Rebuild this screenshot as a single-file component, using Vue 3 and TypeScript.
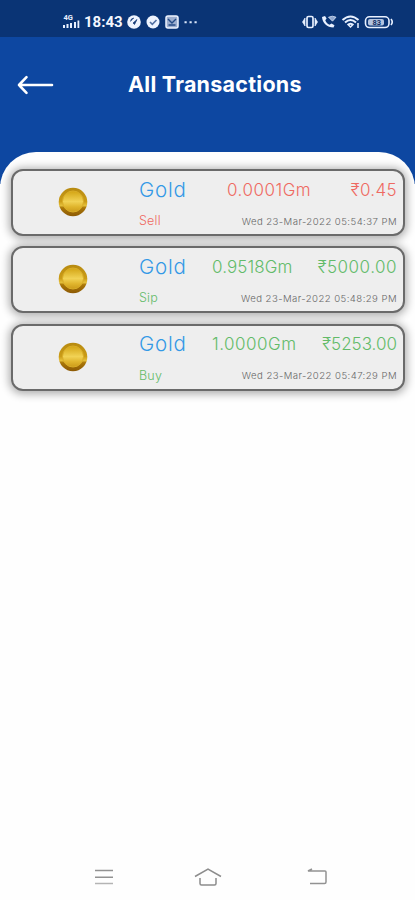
<script setup lang="ts">
interface Transaction {
  asset: string
  kind: 'Sell' | 'Sip' | 'Buy'
  weight: string
  weightSpacing: number
  amount: string
  amountSpacing: number
  date: string
}

const transactions: Transaction[] = [
  { asset: 'Gold', kind: 'Sell', weight: '0.0001Gm', weightSpacing: 0.5, amount: '₹0.45', amountSpacing: 0.35, date: 'Wed 23-Mar-2022 05:54:37 PM' },
  { asset: 'Gold', kind: 'Sip', weight: '0.9518Gm', weightSpacing: 0.1, amount: '₹5000.00', amountSpacing: 0.5, date: 'Wed 23-Mar-2022 05:48:29 PM' },
  { asset: 'Gold', kind: 'Buy', weight: '1.0000Gm', weightSpacing: 0.5, amount: '₹5253.00', amountSpacing: 0, date: 'Wed 23-Mar-2022 05:47:29 PM' },
]
</script>

<template>
  <div class="screen">
    <div class="status">
      <svg class="signal" width="18" height="18" viewBox="0 0 18 18" fill="#e8f0ff">
        <text x="0.500" y="7" font-size="7.500" font-weight="700" font-family="Roboto, sans-serif">4G</text>
        <path d="M0 12h2v3H0zM3.500 11h2v4h-2zM7 10h2v5H7zM11 9h2v6h-2zM14.500 7.500h1.800V15h-1.800z" />
      </svg>
      <span class="clock">18:43</span>
      <svg class="notices" width="72" height="16" viewBox="0 0 72 16">
        <circle cx="7" cy="8" r="6.800" fill="#eef4ff" />
        <path d="M3.500 7.500a3.800 3.800 0 0 1 3.500-3.500M6 9l4-3.500-2.500 5z" stroke="#173c78" fill="#173c78" stroke-width=".7" />
        <circle cx="26" cy="8" r="6.500" fill="#eef4ff" />
        <path d="m23 8 2.300 2.300L29.500 6" fill="none" stroke="#5270a2" stroke-width="1.600" />
        <rect x="39" y="2" width="12" height="12" rx="2" fill="#9caecf" stroke="#eef4ff" stroke-width="1.500" />
        <path d="m41 5 4 4 4-4M41.500 11h7" fill="none" stroke="#244b86" stroke-width="1.400" />
        <path d="M57.500 7.300h2.200v2h-2.200zm5 0h2.200v2h-2.200zm5 0h2.200v2h-2.200z" fill="#dbe7fa" />
      </svg>
      <svg class="system" width="94" height="18" viewBox="0 0 94 18" fill="none" stroke="#e8f0ff">
        <rect x="5" y="3.500" width="6" height="11" rx="1.500" stroke-width="1.700" />
        <path d="M3 5v8L0.500 9zM13 5v8l2.500-4z" fill="#e8f0ff" stroke-width=".7" />
        <path d="M20 4c.5 6 5 10.500 11.500 10.500l1-2.300-3-1.700-2 1.200c-2-1-3.500-2.500-4.200-4.500l1.300-1.600L23 3z" fill="#e8f0ff" stroke="none" />
        <path d="M26.500 4.200q4-2 7.500 0l-3.500 4z" fill="#8fa8d1" stroke-width=".7" />
        <path d="M40.500 7q8-7 16 0M43 9.500q5.500-5 11 0M45.500 12q3-2.500 6 0" stroke-width="2" />
        <path d="m46.500 12 2 2 2-2M56 10v5" stroke-width="1.500" />
        <rect x="63.500" y="3.800" width="23.500" height="10.700" rx="4" stroke-width="1.600" />
        <rect x="66" y="6" width="16" height="6.500" rx="2" fill="#b3c3df" stroke="none" />
        <path d="M89 6q2.500 3 0 6" stroke-width="1.600" />
        <text x="70.500" y="12" font-size="7.500" font-weight="700" font-family="Roboto, sans-serif" fill="#102f63" stroke="none">83</text>
      </svg>
    </div>

    <header class="header">
      <svg class="back" width="38" height="22" viewBox="0 0 38 22" fill="none" stroke="#fff" stroke-width="2.600" stroke-linecap="round" stroke-linejoin="round">
        <path d="M35 11H2M9.500 3.200 2 11l7.500 7.800" />
      </svg>
      <h1 class="title">All Transactions</h1>
    </header>

    <main class="sheet">
      <article v-for="item in transactions" :key="item.date" class="card" :class="item.kind.toLowerCase()">
        <div class="coin-cell">
          <svg class="coin" width="30" height="30" viewBox="0 0 30 30">
            <defs>
              <linearGradient id="rim" x1="0" y1="0" x2="0" y2="1">
                <stop offset="0" stop-color="#b78a10" />
                <stop offset=".48" stop-color="#cb9c17" />
                <stop offset=".62" stop-color="#e5c03b" />
                <stop offset=".7" stop-color="#a97608" />
                <stop offset="1" stop-color="#8d5a05" />
              </linearGradient>
              <linearGradient id="face" x1="0" y1="0" x2="0" y2="1">
                <stop offset="0" stop-color="#d3a413" />
                <stop offset=".5" stop-color="#f1d255" />
                <stop offset=".75" stop-color="#e0b52d" />
                <stop offset="1" stop-color="#cc9b1a" />
              </linearGradient>
            </defs>
            <circle cx="15" cy="15" r="14.300" fill="url(#rim)" />
            <circle cx="15" cy="14.500" r="10.500" fill="url(#face)" stroke="#d9ad28" stroke-width="1" />
          </svg>
        </div>
        <div class="details">
          <div class="top">
            <span class="asset">{{ item.asset }}</span>
            <span class="weight" :style="{ letterSpacing: item.weightSpacing + 'px' }">{{ item.weight }}</span>
            <span class="amount" :style="{ letterSpacing: item.amountSpacing + 'px' }">{{ item.amount }}</span>
          </div>
          <div class="bottom">
            <span class="kind">{{ item.kind }}</span>
            <span class="date">{{ item.date }}</span>
          </div>
        </div>
      </article>
    </main>

    <nav class="nav">
      <svg width="20" height="18" viewBox="0 0 20 18" fill="none" stroke="#929292" stroke-width="1.500">
        <path d="M1 2.500h18M1 9.200h18" /><path d="M1 15.500h18" stroke="#b4b4b4" />
      </svg>
      <svg width="28" height="20" viewBox="0 0 28 20" fill="none" stroke="#8c8c8c" stroke-width="1.500">
        <path d="M1 9.500 14 2l13 7.500M6 11v5.500q0 1.500 1.500 1.500h13q1.500 0 1.500-1.500V11" />
      </svg>
      <svg class="return" width="22" height="20" viewBox="0 0 22 20" fill="none" stroke="#929292" stroke-width="1.500">
        <path d="M6 2 2 4h17q1 0 1 1v10q0 1.500-1.500 1.500H4" />
      </svg>
    </nav>
  </div>
</template>

<style>
body { background: #fff; overflow: hidden; }
</style>

<style scoped>
.screen {
  width: 415px;
  height: 900px;
  box-sizing: border-box;
  display: flex;
  flex-direction: column;
  background: linear-gradient(#0d47a1 0 184px, #fefefe 184px);
  font-family: Inter, sans-serif;
  overflow: hidden;
}
.status {
  height: 37px;
  flex: none;
  display: flex;
  align-items: center;
  box-sizing: border-box;
  padding: 7px 19px 0 63px;
  background: #0a3475;
}
.signal { margin-right: 3px; }
.clock { width: 43px; color: #f3f7ff; font: 700 15px Roboto, sans-serif; }
.notices { flex: none; }
.system { margin-left: auto; flex: none; }
.header {
  height: 115px;
  flex: none;
  box-sizing: border-box;
  display: flex;
  align-items: flex-start;
  padding: 33px 0 0 17px;
}
.back { margin: 4px 73px 0 0; }
.title { margin: 0; color: #fff; font-size: 21.5px; font-weight: 700; line-height: 28px; white-space: nowrap; letter-spacing: .25px; }
.sheet {
  flex: 1;
  min-height: 0;
  display: flex;
  flex-direction: column;
  gap: 10.4px;
  padding: 17px 10px 0 11px;
  border-radius: 36px 36px 0 0;
  background: #fefefe;
}
.card {
  height: 67px;
  box-sizing: border-box;
  flex: none;
  display: flex;
  border: 2px solid #6a6a6a;
  border-radius: 12px;
  background: #eee;
  box-shadow: 0 1px 8px 2px rgba(0, 0, 0, .32);
}
.coin-cell { width: 126px; flex: none; padding: 16px 0 0 45px; box-sizing: border-box; }
.coin { display: block; }
.details { flex: 1; display: flex; flex-direction: column; padding: 5px 6px 0 0; white-space: nowrap; color: #62bb69; }
.top { display: flex; align-items: center; height: 26px; }
.asset { color: #3499e6; font-size: 20.5px; font-weight: 350; letter-spacing: .8px; width: 73px; }
.weight, .amount { font-size: 17px; font-weight: 300; padding-top: 1px; }
.amount { margin-left: auto; }
.sell .weight { margin-left: 15px; }
.bottom { display: flex; justify-content: space-between; align-items: center; height: 18px; margin-top: 9px; }
.kind { font-size: 12.5px; font-weight: 300; letter-spacing: .2px; padding-top: 1px; }
.date { font-size: 9.6px; color: #666; font-weight: 300; letter-spacing: .44px; padding-top: 2px; }
.sell .details { color: #ee6961; }
.nav {
  height: 47px;
  flex: none;
  display: flex;
  align-items: center;
  justify-content: flex-start;
  gap: 80px;
  box-sizing: border-box;
  padding: 0 0 0 94px;
  background: #fefefe;
}
.return { margin-left: 4px; }
</style>
